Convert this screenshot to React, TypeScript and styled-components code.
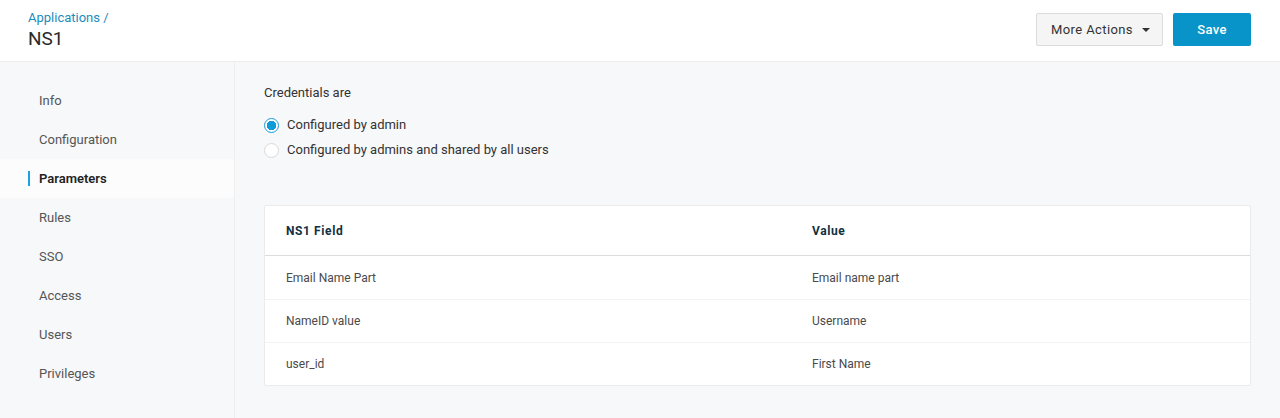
import React, { useState } from "react";
import styled, { createGlobalStyle } from "styled-components";

const GlobalStyle = createGlobalStyle`
  html, body {
    margin: 0;
    padding: 0;
    height: 100%;
  }
  body {
    font-family: Roboto, "Liberation Sans", Arial, sans-serif;
    background: #f7f8fa;
    color: #3d3d3d;
    -webkit-font-smoothing: antialiased;
  }
`;

const navItems = [
  "Info",
  "Configuration",
  "Parameters",
  "Rules",
  "SSO",
  "Access",
  "Users",
  "Privileges",
];

const rows = [
  { field: "Email Name Part", value: "Email name part" },
  { field: "NameID value", value: "Username" },
  { field: "user_id", value: "First Name" },
];

const App: React.FC = () => {
  const [mode, setMode] = useState("admin");

  return (
    <Page>
      <GlobalStyle />
      <Header>
        <TitleBlock>
          <Crumb href="#">Applications /</Crumb>
          <Title>NS1</Title>
        </TitleBlock>
        <Actions>
          <GhostButton>
            More Actions
            <Caret />
          </GhostButton>
          <PrimaryButton>Save</PrimaryButton>
        </Actions>
      </Header>
      <Body>
        <Sidebar>
          {navItems.map((item) => (
            <NavItem key={item} active={item === "Parameters"}>
              {item}
            </NavItem>
          ))}
        </Sidebar>
        <Content>
          <Label>Credentials are</Label>
          <RadioGroup>
            <RadioRow onClick={() => setMode("admin")}>
              <Radio checked={mode === "admin"} />
              Configured by admin
            </RadioRow>
            <RadioRow onClick={() => setMode("shared")}>
              <Radio checked={mode === "shared"} />
              Configured by admins and shared by all users
            </RadioRow>
          </RadioGroup>
          <Card>
            <HeadRow>
              <HeadCell>NS1 Field</HeadCell>
              <HeadCell>Value</HeadCell>
            </HeadRow>
            {rows.map((r) => (
              <Row key={r.field}>
                <Cell>{r.field}</Cell>
                <Cell>{r.value}</Cell>
              </Row>
            ))}
          </Card>
        </Content>
      </Body>
    </Page>
  );
};

export default App;

const Page = styled.div`
  min-height: 418px;
  display: flex;
  flex-direction: column;
`;

const Header = styled.header`
  height: 61px;
  background: #ffffff;
  border-bottom: 1px solid #ececec;
  display: flex;
  align-items: center;
  justify-content: space-between;
  padding: 0 29px 0 28px;
  box-sizing: content-box;
`;

const TitleBlock = styled.div`
  display: flex;
  flex-direction: column;
  margin-top: -1px;
`;

const Crumb = styled.a`
  color: #1a8dbd;
  font-size: 13px;
  line-height: 18px;
  text-decoration: none;
`;

const Title = styled.h1`
  margin: 0;
  font-size: 19px;
  font-weight: 400;
  line-height: 24px;
  color: #2a2a2a;
`;

const Actions = styled.div`
  display: flex;
  gap: 10px;
  margin-top: -2px;
`;

const GhostButton = styled.button`
  height: 33px;
  width: 127px;
  display: flex;
  align-items: center;
  justify-content: center;
  gap: 9px;
  background: #f5f5f5;
  border: 1px solid #dcdcdc;
  border-radius: 2px;
  font-family: inherit;
  font-size: 13px;
  letter-spacing: 0.4px;
  color: #333;
  padding: 0 0 0 2px;
`;

const Caret = styled.span`
  width: 0;
  height: 0;
  border-left: 4px solid transparent;
  border-right: 4px solid transparent;
  border-top: 4px solid #333;
`;

const PrimaryButton = styled.button`
  height: 33px;
  width: 78px;
  background: #0894c8;
  border: none;
  border-radius: 2px;
  color: #fff;
  font-family: inherit;
  font-size: 13px;
  font-weight: 500;
  letter-spacing: 0.4px;
`;

const Body = styled.div`
  flex: 1;
  display: flex;
`;

const Sidebar = styled.nav`
  width: 235px;
  border-right: 1px solid #efefef;
  padding-top: 19px;
  display: flex;
  flex-direction: column;
  min-height: 357px;
  box-sizing: border-box;
`;

const NavItem = styled.div<{ active?: boolean }>`
  position: relative;
  height: 39px;
  display: flex;
  align-items: center;
  padding-left: 39px;
  font-size: 13px;
  color: ${(p) => (p.active ? "#222" : "#555")};
  font-weight: ${(p) => (p.active ? 600 : 400)};
  background: ${(p) => (p.active ? "#fcfcfd" : "transparent")};

  &::before {
    content: "";
    display: ${(p) => (p.active ? "block" : "none")};
    position: absolute;
    left: 28px;
    top: 12px;
    width: 2px;
    height: 15px;
    background: #1aa3e0;
  }
`;

const Content = styled.main`
  flex: 1;
  padding: 23px 29px 0 29px;
`;

const Label = styled.div`
  font-size: 13px;
  color: #333;
  line-height: 16px;
  margin-bottom: 16px;
`;

const RadioGroup = styled.div`
  display: flex;
  flex-direction: column;
  gap: 9px;
  margin-bottom: 47px;
`;

const RadioRow = styled.label`
  display: flex;
  align-items: center;
  gap: 8px;
  font-size: 13px;
  color: #333;
  line-height: 16px;
  cursor: pointer;
`;

const Radio = styled.span<{ checked?: boolean }>`
  width: 15px;
  height: 15px;
  border-radius: 50%;
  box-sizing: border-box;
  border: 1px solid ${(p) => (p.checked ? "#1a9ad6" : "#d9d9d9")};
  background: ${(p) =>
    p.checked
      ? "radial-gradient(circle, #0d9bd9 0 4.5px, #fff 5px)"
      : "#fff"};
`;

const Card = styled.div`
  background: #fff;
  border: 1px solid #ebebeb;
  border-radius: 2px;
  width: 987px;
  box-sizing: border-box;
`;

const HeadRow = styled.div`
  display: grid;
  grid-template-columns: 526px 1fr;
  height: 50px;
  box-sizing: border-box;
  align-items: center;
  border-bottom: 1px solid #dcdcdc;
`;

const HeadCell = styled.div`
  padding-left: 21px;
  font-size: 12px;
  font-weight: 700;
  letter-spacing: 0.6px;
  color: #13303f;
`;

const Row = styled.div`
  display: grid;
  grid-template-columns: 526px 1fr;
  height: 43px;
  box-sizing: border-box;
  align-items: center;
  border-top: 1px solid #f3f3f3;

  &:nth-child(2) {
    border-top: none;
  }
`;

const Cell = styled.div`
  padding-left: 21px;
  font-size: 12px;
  color: #4a4a4a;
`;
